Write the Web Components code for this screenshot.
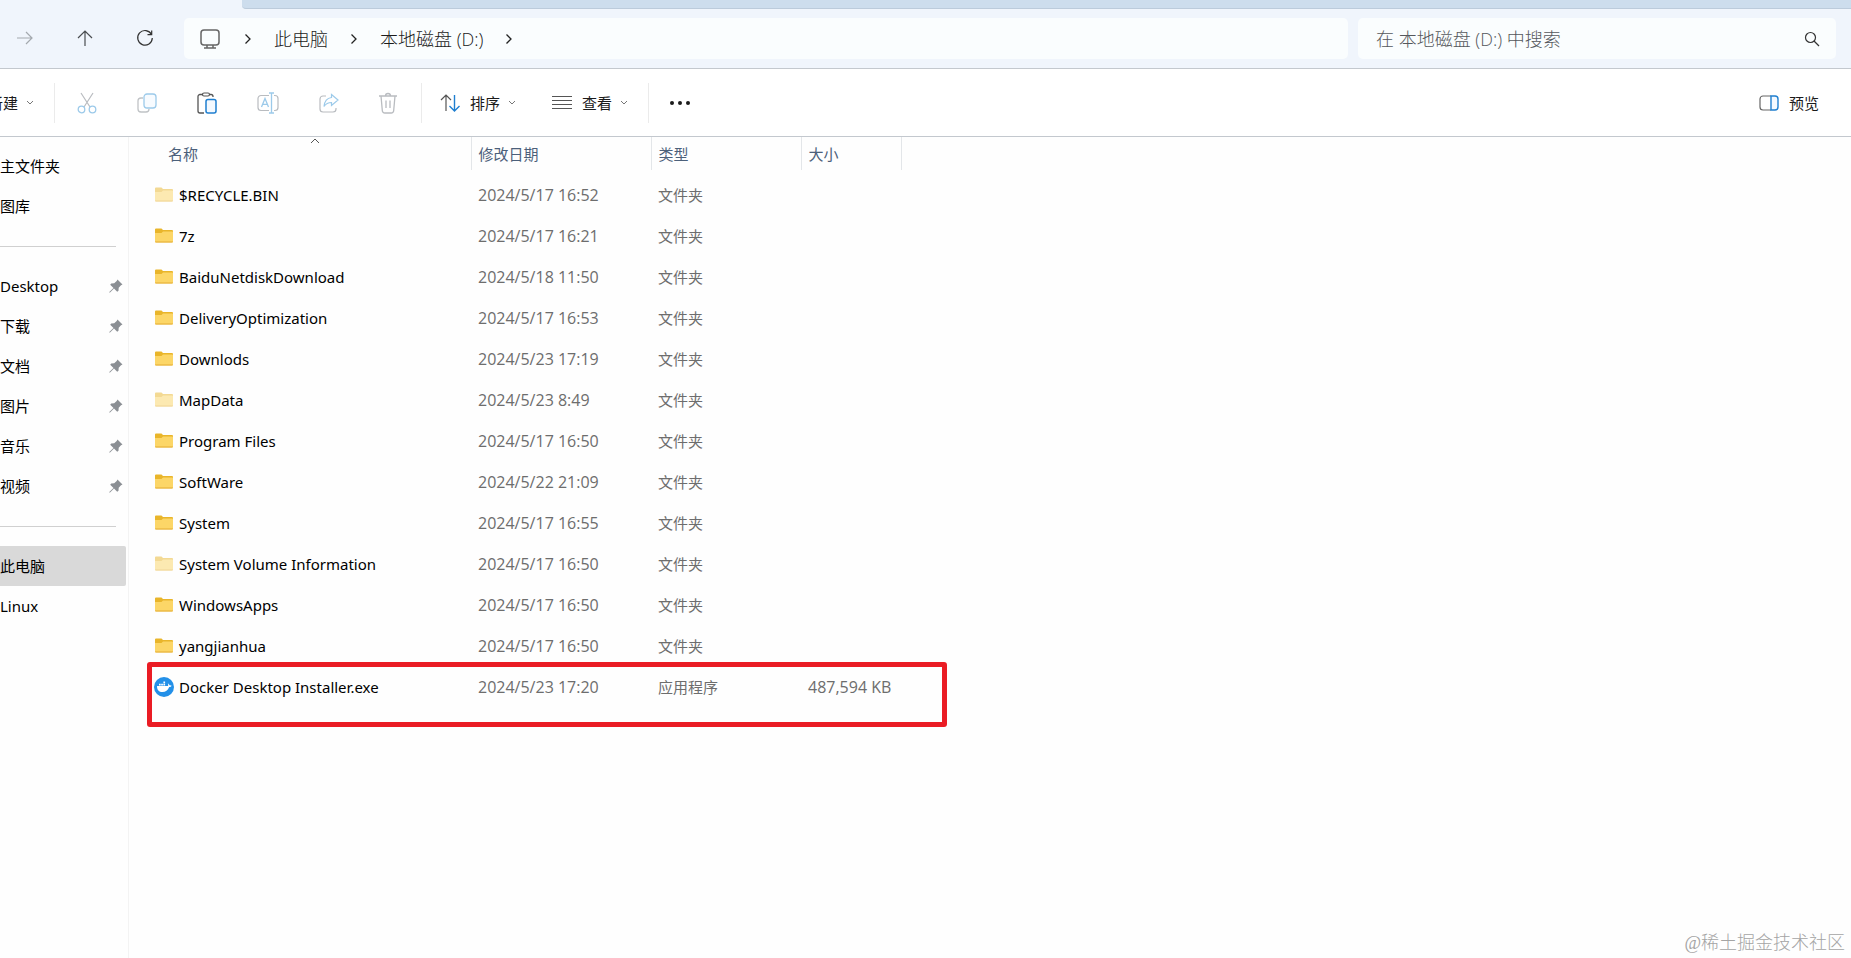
<!DOCTYPE html>
<html lang="zh-CN">
<head>
<meta charset="utf-8">
<title>本地磁盘 (D:)</title>
<style>
    html, body {
        height: 100%;
    }

    body {
        margin: 0;
        overflow: hidden;
        background: #fefefe;
        color: #1b1b1b;
        font: 15px/20px "Noto Sans", "Noto Sans CJK SC", sans-serif;
    }
</style>
</head>
<body>
<file-explorer>
    <address-bar slot="address"></address-bar>
    <command-bar slot="commands"></command-bar>
    <nav-pane slot="nav"></nav-pane>
    <file-list slot="files"></file-list>
</file-explorer>

<script>
const icons = {
    forward: `<svg width="18" height="18" viewBox="0 0 18 18"><path d="M1 9h15M10 3l6 6-6 6" stroke="#a4a9ae" stroke-width="1.2"/></svg>`,
    up: `<svg width="18" height="18" viewBox="0 0 18 18"><path d="M9 17V2M2 9l7-7 7 7" stroke="#4a4d50" stroke-width="1.2"/></svg>`,
    refresh: `<svg width="18" height="18" viewBox="0 0 18 18"><path d="M15.500 5.500A7.300 7.300 0 1 0 16.300 9M15.700 1.500v4.200h-4.200" stroke="#333" stroke-width="1.200"/></svg>`,
    monitor: `<svg width="20" height="20" viewBox="0 0 20 20"><rect x="1" y="1" width="18" height="15" rx="3" stroke="#666" stroke-width="1.5"/><path d="M7 16v3M13 16v3M4 19h12" stroke="#666" stroke-width="1.5"/></svg>`,
    crumb: `<svg width="8" height="12" viewBox="0 0 8 12"><path d="M1.5 1.5L6 6l-4.5 4.5" stroke="#222" stroke-width="1.3"/></svg>`,
    search: `<svg width="16" height="16" viewBox="0 0 16 16"><circle cx="6.5" cy="6.5" r="5" stroke="#333" stroke-width="1.2"/><path d="M10 10l5 5" stroke="#333" stroke-width="1.2"/></svg>`,
    down: `<svg width="8" height="6" viewBox="0 0 8 6"><path d="M1 1l3 3 3-3" stroke="#777"/></svg>`,
    cut: `<svg width="20" height="22" viewBox="0 0 20 22"><path d="M4 1l9 14M16 1L7 15" stroke="#b9bcc0" stroke-width="1.2"/><circle cx="4.5" cy="17.5" r="3.3" stroke="#9ccaea" stroke-width="1.3"/><circle cx="15.5" cy="17.5" r="3.3" stroke="#9ccaea" stroke-width="1.3"/></svg>`,
    copy: `<svg width="20" height="20" viewBox="0 0 20 20"><path d="M6 5H4a3 3 0 0 0-3 3v8a3 3 0 0 0 3 3h5a3 3 0 0 0 3-3" stroke="#c0c3c6" stroke-width="1.3"/><rect x="7" y="1" width="12" height="14" rx="3" stroke="#9ccaea" stroke-width="1.3" fill="#f7fbff"/></svg>`,
    paste: `<svg width="20" height="22" viewBox="0 0 20 22"><path d="M6 2.5H3a2 2 0 0 0-2 2V19a2 2 0 0 0 2 2h4M13 2.5h1a2 2 0 0 1 2 2V5" stroke="#555" stroke-width="1.3"/><rect x="5.5" y="1" width="7" height="3" rx="1.5" stroke="#555" stroke-width="1.2"/><rect x="9" y="7.5" width="10" height="13.5" rx="2" stroke="#1f7fd0" stroke-width="1.5" fill="#f3f9ff"/></svg>`,
    rename: `<svg width="22" height="22" viewBox="0 0 22 22"><path d="M12 3.500H4a3 3 0 0 0-3 3v9a3 3 0 0 0 3 3h8M17 3.500h1a3 3 0 0 1 3 3v9a3 3 0 0 1-3 3h-1" stroke="#b9bcc0" stroke-width="1.2"/><path d="M4.500 15L8 6.500l3.500 8.500M5.600 12.300h4.800M14.500 1v20M12 1h5M12 21h5" stroke="#9ccaea" stroke-width="1.300"/></svg>`,
    share: `<svg width="20" height="20" viewBox="0 0 20 20"><path d="M7 3H4a3 3 0 0 0-3 3v10a3 3 0 0 0 3 3h10a3 3 0 0 0 3-3v-1" stroke="#b9bcc0" stroke-width="1.2"/><path d="M12.500 1.500L19 7l-6.500 5.500V9.500c-3.500 0-5.500 1-7.500 4 .5-5 3-8.500 7.500-9z" stroke="#9ccaea" stroke-width="1.200"/></svg>`,
    trash: `<svg width="18" height="22" viewBox="0 0 18 22"><path d="M0 4h18M6.500 4a2.500 2.500 0 0 1 5 0M2 4l1.300 14.500A2.500 2.500 0 0 0 5.800 21h6.400a2.500 2.500 0 0 0 2.500-2.500L16 4M7 8.500v7.500M11 8.500v7.500" stroke="#b9bcc0" stroke-width="1.3"/></svg>`,
    sort: `<svg width="20" height="18" viewBox="0 0 20 18"><path d="M6 17V1M1 6l5-5 5 5" stroke="#555" stroke-width="1.2"/><path d="M14.500 1v15.500M9.500 12l5 5 5-5" stroke="#1f7fd0" stroke-width="1.4"/></svg>`,
    view: `<svg width="20" height="14" viewBox="0 0 20 14"><path d="M0 .5h20M0 4.500h20M0 8.500h20M0 12.500h20" stroke="#555"/></svg>`,
    more: `<svg width="22" height="6" viewBox="0 0 22 6"><g fill="#1b1b1b"><circle cx="3" cy="3" r="2"/><circle cx="11" cy="3" r="2"/><circle cx="19" cy="3" r="2"/></g></svg>`,
    preview: `<svg width="20" height="16" viewBox="0 0 20 16"><path d="M12 1H4a3 3 0 0 0-3 3v8a3 3 0 0 0 3 3h8" stroke="#666" stroke-width="1.2"/><path d="M12 1h4a3 3 0 0 1 3 3v8a3 3 0 0 1-3 3h-4z" stroke="#1f7fd0" stroke-width="1.4" fill="#f3f9ff"/></svg>`,
    ascending: `<svg width="10" height="6" viewBox="0 0 10 6"><path d="M1 5l4-4 4 4" stroke="#555"/></svg>`,
    pin: `<svg width="14" height="14" viewBox="0 0 14 14"><path d="M8.500 .5l5 5-1.500.8-2.300 2.500-.2 3-1.300 1L5 9.500 1 13.500H.3V13L4.500 9 1.200 5.800l1-1.300 3-.2L7.700 2z" fill="#8b8f94"/></svg>`,
    folder: `<svg width="18" height="15" viewBox="0 0 18 15"><path d="M0 1.500A1 1 0 0 1 1 .5h5.500L8 2h9a1 1 0 0 1 1 1v3H0z" fill="#e9b52a"/><path d="M0 5h6.500L8 3.500h9.300a.7.7 0 0 1 .7.7V13.500a1 1 0 0 1-1 1H1a1 1 0 0 1-1-1z" fill="#fcd667"/><path d="M0 13.500h18a1 1 0 0 1-1 1H1a1 1 0 0 1-1-1z" fill="#e3ab34"/></svg>`,
    docker: `<svg width="20" height="20" viewBox="0 0 20 20"><circle cx="10" cy="10" r="10" fill="#2390e8"/><path d="M3 9h11c.4-1 .2-1.800-.2-2.500 1 .2 1.500.9 1.700 1.800.8-.2 1.600 0 2.200.5-.5.9-1.300 1.300-2.500 1.300-1.300 3.500-3.600 5-6.700 5C5 15.100 3 13 3 9zM5 6.800h1.700v1.700H5zM7.200 6.800h1.700v1.700H7.200zM9.400 6.800h1.700v1.700H9.400zM9.400 4.600h1.700v1.700H9.400z" fill="#fff"/></svg>`
};

const sharedStyle = `
    :host, * {
        box-sizing: border-box;
    }

    svg {
        display: block;
        flex: none;
        fill: none;
    }

    button, input {
        margin: 0;
        padding: 0;
        border: 0;
        background: none;
        color: inherit;
        font: inherit;
    }
`;

class ExplorerElement extends HTMLElement {
    constructor() {
        super();
        this._shadowDOM = this.attachShadow({mode: "open"});
    }

    connectedCallback() {
        this.render();
    }
}

class FileExplorer extends ExplorerElement {
    render() {
        this._shadowDOM.innerHTML = `
            <style>
                ${sharedStyle}
                :host {
                    display: flex;
                    flex-direction: column;
                    min-height: 100vh;
                    position: relative;
                }

                .tab-strip {
                    height: 9px;
                    padding-left: 242px;
                    background: #f0f5fc;
                }

                .tab-strip > div {
                    height: 100%;
                    background: #cddded;
                    border-bottom: 1px solid #bccbdb;
                    border-bottom-left-radius: 4px;
                }

                .body {
                    display: flex;
                    flex: 1;
                }

                .watermark {
                    position: absolute;
                    right: 6px;
                    bottom: 3px;
                    color: #a4a4a4;
                    font: 300 18px/24px "Liberation Serif", "Noto Sans CJK SC", serif;
                }
            </style>
            <div class="tab-strip"><div></div></div>
            <slot name="address"></slot>
            <slot name="commands"></slot>
            <div class="body">
                <slot name="nav"></slot>
                <slot name="files"></slot>
            </div>
            <div class="watermark">@稀土掘金技术社区</div>`;
    }
}

class AddressBar extends ExplorerElement {
    render() {
        this._shadowDOM.innerHTML = `
            <style>
                ${sharedStyle}
                :host {
                    display: flex;
                    align-items: flex-start;
                    height: 60px;
                    padding: 9px 15px 0 16px;
                    background: #f0f5fc;
                    border-bottom: 1px solid #c3c8ce;
                    font-family: "Open Sans", "Noto Sans CJK SC", sans-serif;
                    font-size: 18px;
                    font-weight: 300;
                    line-height: 24px;
                }

                .history {
                    display: flex;
                    align-items: center;
                    gap: 42px;
                    height: 40px;
                    margin-right: 30px;
                }

                nav, form {
                    display: flex;
                    align-items: center;
                    height: 41px;
                    border-radius: 5px;
                    background: #fafdfe;
                }

                nav {
                    flex: 1;
                    gap: 22px;
                    padding-left: 16px;
                    margin-right: 10px;
                }

                nav svg:first-child {
                    margin-right: 2px;
                }

                form {
                    width: 478px;
                    padding: 0 16px 0 18px;
                }

                a {
                    color: inherit;
                    text-decoration: none;
                    white-space: nowrap;
                }

                input {
                    flex: 1;
                    min-width: 0;
                    outline: 0;
                }

                input::placeholder {
                    color: #55585c;
                    opacity: 1;
                }
            </style>
            <div class="history">
                <button aria-label="前进" disabled>${icons.forward}</button>
                <button aria-label="向上">${icons.up}</button>
                <button aria-label="刷新">${icons.refresh}</button>
            </div>
            <nav>
                ${icons.monitor}
                ${icons.crumb}
                <a href="#pc">此电脑</a>
                ${icons.crumb}
                <a href="#d">本地磁盘 (D:)</a>
                ${icons.crumb}
            </nav>
            <form>
                <input type="text" aria-label="搜索" placeholder="在 本地磁盘 (D:) 中搜索">
                <button type="button" aria-label="搜索">${icons.search}</button>
            </form>`;
    }
}

class CommandBar extends ExplorerElement {
    render() {
        this._shadowDOM.innerHTML = `
            <style>
                ${sharedStyle}
                :host {
                    display: flex;
                    align-items: center;
                    height: 68px;
                    padding-right: 32px;
                    background: #fff;
                    border-bottom: 1px solid #c3c8ce;
                }

                button {
                    display: flex;
                    align-items: center;
                    white-space: nowrap;
                }

                .new {
                    gap: 8px;
                    margin-left: -12px;
                }

                .tools, .menus {
                    display: flex;
                    align-items: center;
                    height: 40px;
                    border-left: 1px solid #ebebeb;
                }

                .tools {
                    gap: 40px;
                    margin-left: 20px;
                    padding: 0 24px 0 22px;
                }

                .menus {
                    gap: 36px;
                    padding: 0 20px 0 18px;
                    border-right: 1px solid #ebebeb;
                }

                .menus button {
                    gap: 8px;
                }

                .menus span {
                    margin-left: 2px;
                }

                .more {
                    margin-left: 20px;
                }

                .preview {
                    gap: 10px;
                    margin-left: auto;
                }
            </style>
            <button class="new"><span>新建</span>${icons.down}</button>
            <div class="tools">
                <button aria-label="剪切" disabled>${icons.cut}</button>
                <button aria-label="复制" disabled>${icons.copy}</button>
                <button aria-label="粘贴">${icons.paste}</button>
                <button aria-label="重命名" disabled>${icons.rename}</button>
                <button aria-label="共享" disabled>${icons.share}</button>
                <button aria-label="删除" disabled>${icons.trash}</button>
            </div>
            <div class="menus">
                <button>${icons.sort}<span>排序</span>${icons.down}</button>
                <button>${icons.view}<span>查看</span>${icons.down}</button>
            </div>
            <button class="more" aria-label="更多">${icons.more}</button>
            <button class="preview">${icons.preview}<span>预览</span></button>`;
    }
}

class NavItem extends ExplorerElement {
    render() {
        const pin = this.hasAttribute("pinned") ? icons.pin : "";
        this._shadowDOM.innerHTML = `
            <style>
                ${sharedStyle}
                :host {
                    display: block;
                }

                a {
                    display: flex;
                    align-items: center;
                    justify-content: space-between;
                    height: 40px;
                    padding-right: 3px;
                    color: #000;
                    text-decoration: none;
                }

                :host([selected]) a {
                    background: #d9d9d9;
                    border-radius: 0 2px 2px 0;
                }
            </style>
            <a href="#"><slot></slot>${pin}</a>`;
    }
}

class NavPane extends ExplorerElement {
    render() {
        this._shadowDOM.innerHTML = `
            <style>
                ${sharedStyle}
                :host {
                    display: block;
                    width: 129px;
                    padding: 9px 2px 0 0;
                    border-right: 1px solid #f3f3f3;
                }

                hr {
                    height: 1px;
                    margin: 20px 10px 19px 0;
                    border: 0;
                    background: #d0d0d0;
                }
            </style>
            <nav-item>主文件夹</nav-item>
            <nav-item>图库</nav-item>
            <hr>
            <nav-item pinned>Desktop</nav-item>
            <nav-item pinned>下载</nav-item>
            <nav-item pinned>文档</nav-item>
            <nav-item pinned>图片</nav-item>
            <nav-item pinned>音乐</nav-item>
            <nav-item pinned>视频</nav-item>
            <hr>
            <nav-item selected>此电脑</nav-item>
            <nav-item>Linux</nav-item>`;
    }
}

const files = [
    {name: "$RECYCLE.BIN", date: "2024/5/17 16:52", hidden: true},
    {name: "7z", date: "2024/5/17 16:21"},
    {name: "BaiduNetdiskDownload", date: "2024/5/18 11:50"},
    {name: "DeliveryOptimization", date: "2024/5/17 16:53"},
    {name: "Downlods", date: "2024/5/23 17:19"},
    {name: "MapData", date: "2024/5/23 8:49", hidden: true},
    {name: "Program Files", date: "2024/5/17 16:50"},
    {name: "SoftWare", date: "2024/5/22 21:09"},
    {name: "System", date: "2024/5/17 16:55"},
    {name: "System Volume Information", date: "2024/5/17 16:50", hidden: true},
    {name: "WindowsApps", date: "2024/5/17 16:50"},
    {name: "yangjianhua", date: "2024/5/17 16:50"},
    {name: "Docker Desktop Installer.exe", date: "2024/5/23 17:20", type: "应用程序", size: "487,594 KB", icon: "docker"}
];

class FileList extends ExplorerElement {
    render() {
        let rows = "";
        for (const file of files) {
            rows += `
                <tr class="${file.icon ? "marked" : ""}">
                    <td>
                        <div class="name">
                            <i class="${file.hidden ? "dim" : ""}">${icons[file.icon || "folder"]}</i>
                            <span>${file.name}</span>
                        </div>
                    </td>
                    <td class="date">${file.date}</td>
                    <td>${file.type || "文件夹"}</td>
                    <td class="size">${file.size || ""}</td>
                </tr>`;
        }

        this._shadowDOM.innerHTML = `
            <style>
                ${sharedStyle}
                :host {
                    display: block;
                    flex: 1;
                    padding-left: 24px;
                }

                table {
                    width: 748px;
                    table-layout: fixed;
                    border-collapse: collapse;
                }

                th {
                    position: relative;
                    height: 33px;
                    padding: 0 0 0 7px;
                    border-right: 1px solid #e3e6e9;
                    color: #4c607a;
                    font-weight: normal;
                    text-align: left;
                }

                th:first-child {
                    padding-left: 15px;
                }

                th svg {
                    position: absolute;
                    top: 1px;
                    left: 157px;
                }

                tbody::before {
                    content: "";
                    display: block;
                    height: 4px;
                }

                td {
                    height: 41px;
                    padding: 0 0 0 7px;
                    color: #6d6d6d;
                    white-space: nowrap;
                }

                td:first-child {
                    padding-left: 1px;
                    color: #000;
                }

                .name {
                    display: flex;
                    align-items: center;
                }

                i {
                    display: flex;
                    justify-content: center;
                    width: 20px;
                    margin-right: 5px;
                }

                .dim {
                    opacity: 0.5;
                }

                .date, .size {
                    font-family: "Open Sans", sans-serif;
                    font-size: 16px;
                }

                .size {
                    padding-right: 10px;
                    text-align: right;
                }

                .marked {
                    position: relative;
                }

                /* red frame drawn round the installer row */
                .marked td:first-child::after {
                    content: "";
                    position: absolute;
                    top: -4px;
                    right: -46px;
                    bottom: -20px;
                    left: -6px;
                    border: 5px solid #ea1c24;
                    border-radius: 3px;
                }
            </style>
            <table>
                <colgroup>
                    <col style="width: 318px">
                    <col style="width: 180px">
                    <col style="width: 150px">
                    <col style="width: 100px">
                </colgroup>
                <thead>
                    <tr>
                        <th>名称${icons.ascending}</th>
                        <th>修改日期</th>
                        <th>类型</th>
                        <th>大小</th>
                    </tr>
                </thead>
                <tbody>${rows}</tbody>
            </table>`;
    }
}

customElements.define("file-explorer", FileExplorer);
customElements.define("address-bar", AddressBar);
customElements.define("command-bar", CommandBar);
customElements.define("nav-item", NavItem);
customElements.define("nav-pane", NavPane);
customElements.define("file-list", FileList);
</script>
</body>
</html>
